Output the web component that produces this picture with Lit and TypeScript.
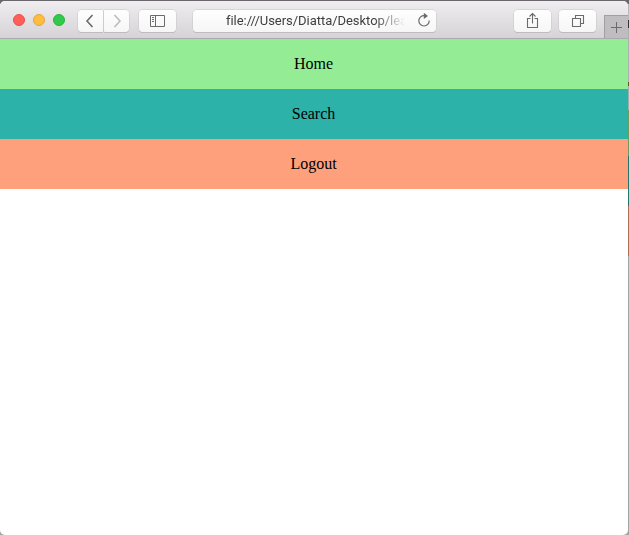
import { LitElement, html, css } from "lit";
import { customElement } from "lit/decorators.js";

@customElement("browser-toolbar")
class BrowserToolbar extends LitElement {
  static styles = css`
    :host {
      display: flex;
      align-items: flex-start;
      box-sizing: border-box;
      height: 38px;
      padding: 8px 0 0 13px;
      background: linear-gradient(#efedef, #d5d3d5);
      border-bottom: 1px solid #acaaac;
      font-family: Roboto, "Liberation Sans", sans-serif;
    }
    .lights { display: flex; flex: none; gap: 8px; padding-top: 5px; width: 65px; }
    .light { width: 12px; height: 12px; box-sizing: border-box; border-radius: 50%; }
    .close { background: #ff5f58; border: 1px solid #e5504a; }
    .minimize { background: #ffbd40; border: 1px solid #e2a53a; }
    .zoom { background: #31c948; border: 1px solid #2bb13d; }
    .button, .address {
      flex: none;
      box-sizing: border-box;
      height: 22px;
      border-radius: 4px;
      background: linear-gradient(#fefefe, #f6f6f6);
      box-shadow: 0 0 0 0.5px #c8c6c8, 0 1px 0.5px #b4b2b4;
      display: flex;
      align-items: center;
      justify-content: center;
    }
    .button { width: 37px; margin-top: 1px; }
    .nav { width: 25px; margin-right: 1px; }
    .back { border-radius: 4px 1px 1px 4px; }
    .forward { border-radius: 1px 4px 4px 1px; }
    svg { display: block; fill: none; stroke: #6c6a6c; }
    .forward svg { stroke: #bdbbbd; }
    .sidebar { margin-left: 9px; }
    .address {
      width: 243px;
      margin: 1px 0 0 17px;
      padding: 0 5px 0 33px;
      justify-content: flex-start;
    }
    .url {
      white-space: nowrap;
      font-size: 13px;
      letter-spacing: -0.04px;
      line-height: 20px;
      color: #3f3d3f;
      -webkit-mask-image: linear-gradient(90deg, #000 148px, transparent 179px);
      mask-image: linear-gradient(90deg, #000 148px, transparent 179px);
    }
    .reload { margin: 0 0 2px auto; }
    .share { margin-left: 78px; }
    .tabs { margin-left: 8px; }
    .new-tab {
      flex: none;
      width: 24px;
      height: 22px;
      margin: 6px 0 0 8px;
      border: solid #a19fa1;
      border-width: 1px 0 0 1px;
      background: #bfbdbf;
    }
  `;

  render() {
    return html`
      <div class="lights">
        <span class="light close"></span><span class="light minimize"></span><span class="light zoom"></span>
      </div>
      <div class="button nav back">
        <svg width="25" height="22"><path d="M14.5 5 9 11l5.5 6" stroke-width="1.6" /></svg>
      </div>
      <div class="button nav forward">
        <svg width="25" height="22"><path d="m10.5 5 5.5 6-5.500 6" stroke-width="1.6" /></svg>
      </div>
      <div class="button sidebar">
        <svg width="37" height="22">
          <path d="M11.5 5.5h14v11h-14zM16.5 5.5v11M13 7.5h2M13 9.5h2M13 11.5h2" />
        </svg>
      </div>
      <div class="address">
        <span class="url">file:///Users/Diatta/Desktop/lea</span>
        <svg class="reload" width="14" height="16">
          <path d="M12.2 8.500A5.200 5.200 0 1 1 7.500 3.600" stroke-width="1.2" />
          <path d="m6.8.8 4.200 3.100-4.200 3.100z" fill="#6c6a6c" stroke="none" />
        </svg>
      </div>
      <div class="button share">
        <svg width="37" height="22">
          <path d="M16.5 8.5h-3v9h10v-9h-3M18.5 13.5v-10M15.5 6.5l3-3 3 3" stroke-width="1.1" />
        </svg>
      </div>
      <div class="button tabs">
        <svg width="37" height="22">
          <path d="M13.5 8.5h8v8h-8zM16.5 8.5v-3h8v8h-3" stroke-width="1.1" />
        </svg>
      </div>
      <div class="new-tab">
        <svg width="24" height="22"><path d="M6 11.5h11M11.5 6v11" /></svg>
      </div>
    `;
  }
}

@customElement("app-root")
class AppRoot extends LitElement {
  static styles = css`
    :host {
      display: block;
      box-sizing: border-box;
      height: 535px;
      padding: 1px 1px 0 0;
      overflow: hidden;
      background:
        linear-gradient(90deg, #69676b, #69676b) 0 0 / 100% 4px no-repeat,
        linear-gradient(
          #b9b7b9 0 20px, #343438 20px 28px, #b0aeb0 28px 82px,
          #655523 82px 86px, #aaa8aa 86px 110px, #72995e 110px 156px,
          #20756d 156px 206px, #ac6d57 206px 256px, #a4a4a4 256px
        );
    }
    .window {
      height: 534px;
      border-radius: 5px;
      overflow: hidden;
      background: #fff;
    }
    .item {
      display: flex;
      align-items: center;
      justify-content: center;
      box-sizing: border-box;
      height: 50px;
      padding-right: 1px;
      font: 16px "Liberation Serif", serif;
      color: #000;
    }
    .home { background: #94ed94; }
    .search { background: #2db2aa; }
    .logout { background: #ffa07c; }
  `;

  render() {
    return html`
      <div class="window">
        <browser-toolbar></browser-toolbar>
        <nav>
          <div class="item home">Home</div>
          <div class="item search">Search</div>
          <div class="item logout">Logout</div>
        </nav>
      </div>
    `;
  }
}
